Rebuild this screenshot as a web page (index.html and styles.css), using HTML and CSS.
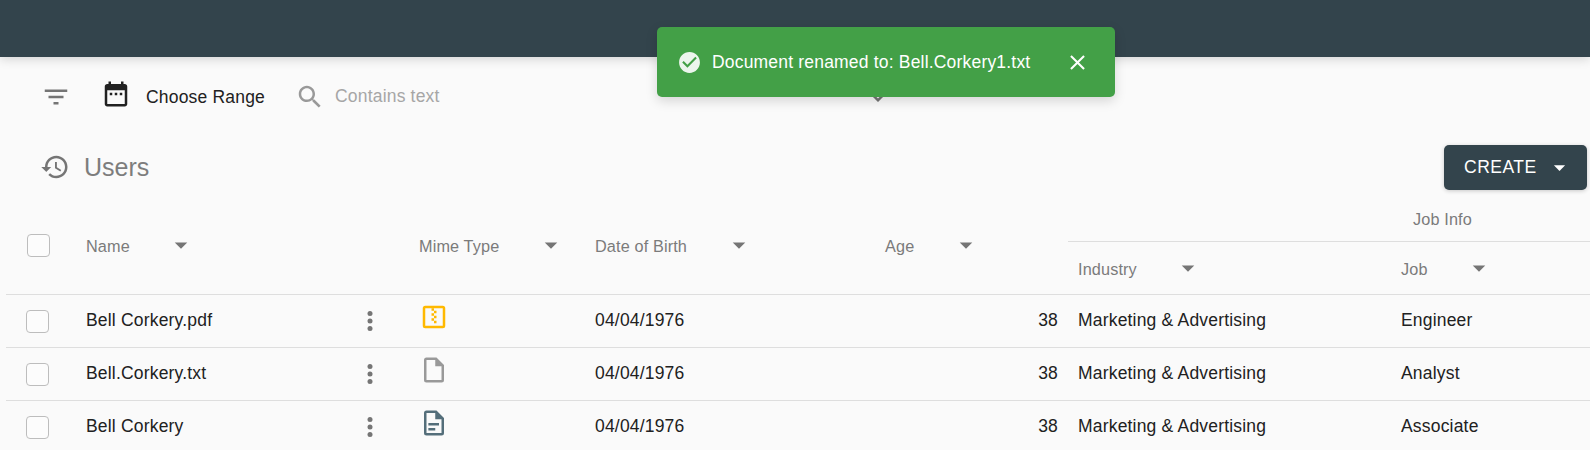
FILE: index.html
```html
<!DOCTYPE html>
<html lang="en">
<head>
<meta charset="utf-8">
<title>Users</title>
<link rel="stylesheet" href="styles.css">
</head>
<body>
<svg class="defs" width="0" height="0" aria-hidden="true">
  <symbol id="drop" viewBox="0 0 24 24"><path d="M7 10l5 5 5-5z"/></symbol>
  <symbol id="more" viewBox="0 0 24 24"><circle cx="12" cy="6" r="2"/><circle cx="12" cy="12" r="2"/><circle cx="12" cy="18" r="2"/></symbol>
</svg>
<header class="appbar"></header>
<section class="filters">
  <svg class="icon filter" viewBox="0 0 24 24"><path d="M10 18h4v-2h-4v2zM3 6v2h18V6H3zm3 7h12v-2H6v2z"/></svg>
  <svg class="icon calendar" viewBox="0 0 24 24"><path d="M9 11H7v2h2v-2zm4 0h-2v2h2v-2zm4 0h-2v2h2v-2zm2-7h-1V2h-2v2H8V2H6v2H5c-1.110 0-1.990.9-1.990 2L3 20c0 1.100.89 2 2 2h14c1.100 0 2-.9 2-2V6c0-1.100-.9-2-2-2zm0 16H5V9h14v11z"/></svg>
  <span class="range">Choose Range</span>
  <svg class="icon search" viewBox="0 0 24 24"><path d="M15.500 14h-.79l-.28-.27C15.410 12.590 16 11.110 16 9.500 16 5.910 13.090 3 9.500 3S3 5.910 3 9.500 5.910 16 9.500 16c1.610 0 3.090-.59 4.230-1.570l.27.28v.79l5 4.990L20.490 19l-4.990-5zm-6 0C7.010 14 5 11.990 5 9.500S7.010 5 9.500 5 14 7.010 14 9.500 11.990 14 9.500 14z"/></svg>
  <span class="placeholder">Contains text</span>
  <svg class="icon expand" viewBox="0 0 24 24"><path d="M16.590 8.590L12 13.170 7.410 8.590 6 10l6 6 6-6z"/></svg>
</section>
<section class="titlebar">
  <svg class="icon" viewBox="0 0 24 24"><path d="M13 3c-4.970 0-9 4.030-9 9H1l3.890 3.890.07.14L9 12H6c0-3.870 3.130-7 7-7s7 3.130 7 7-3.130 7-7 7c-1.930 0-3.680-.79-4.940-2.060l-1.420 1.420C8.270 19.990 10.510 21 13 21c4.970 0 9-4.030 9-9s-4.030-9-9-9zm-1 5v5l4.280 2.540.72-1.210-3.500-2.080V8H12z"/></svg>
  <h1 class="title">Users</h1>
  <button class="create"><span>CREATE</span><svg class="caret" viewBox="0 0 24 24"><use href="#drop"/></svg></button>
</section>
<main class="table">
  <div class="head">
    <div class="cell check"><span class="box"></span></div>
    <div class="cell"><span class="label">Name</span><svg class="icon sort" viewBox="0 0 24 24"><use href="#drop"/></svg></div>
    <div class="cell"></div>
    <div class="cell"><span class="label">Mime Type</span><svg class="icon sort" viewBox="0 0 24 24"><use href="#drop"/></svg></div>
    <div class="cell"><span class="label">Date of Birth</span><svg class="icon sort" viewBox="0 0 24 24"><use href="#drop"/></svg></div>
    <div class="cell"><span class="label">Age</span><svg class="icon sort" viewBox="0 0 24 24"><use href="#drop"/></svg></div>
    <div class="group">
      <div class="group-title">Job Info</div>
      <div class="group-cols">
        <div class="cell"><span class="label">Industry</span><svg class="icon sort" viewBox="0 0 24 24"><use href="#drop"/></svg></div>
        <div class="cell"><span class="label">Job</span><svg class="icon sort" viewBox="0 0 24 24"><use href="#drop"/></svg></div>
      </div>
    </div>
  </div>
  <div class="row">
    <div class="check"><span class="box"></span></div>
    <div>Bell Corkery.pdf</div>
    <div class="menu"><svg class="icon" viewBox="0 0 24 24"><use href="#more"/></svg></div>
    <div class="mime"><svg class="icon zip" viewBox="0 0 24 24"><path fill-rule="evenodd" d="M5 3h14a2 2 0 0 1 2 2v14a2 2 0 0 1-2 2H5a2 2 0 0 1-2-2V5a2 2 0 0 1 2-2zm0 2v14h14V5z"/><path d="M10 5h2v2h-2zM12 7h2v2h-2zM10 9h2v2h-2zM12 11h2v2h-2zM10 13h2v2h-2zM12 15h2v2h-2z"/></svg></div>
    <div>04/04/1976</div>
    <div class="num">38</div>
    <div class="industry">Marketing &amp; Advertising</div>
    <div>Engineer</div>
  </div>
  <div class="row">
    <div class="check"><span class="box"></span></div>
    <div>Bell.Corkery.txt</div>
    <div class="menu"><svg class="icon" viewBox="0 0 24 24"><use href="#more"/></svg></div>
    <div class="mime"><svg class="icon file" viewBox="0 0 24 24"><path fill-rule="evenodd" d="M6 2h8l6 6v12a2 2 0 0 1-2 2H6a2 2 0 0 1-2-2V4a2 2 0 0 1 2-2zm0 2v16h12V9h-5V4z"/></svg></div>
    <div>04/04/1976</div>
    <div class="num">38</div>
    <div class="industry">Marketing &amp; Advertising</div>
    <div>Analyst</div>
  </div>
  <div class="row">
    <div class="check"><span class="box"></span></div>
    <div>Bell Corkery</div>
    <div class="menu"><svg class="icon" viewBox="0 0 24 24"><use href="#more"/></svg></div>
    <div class="mime"><svg class="icon doc" viewBox="0 0 24 24"><path fill-rule="evenodd" d="M6 2h8l6 6v12a2 2 0 0 1-2 2H6a2 2 0 0 1-2-2V4a2 2 0 0 1 2-2zm0 2v16h12V9h-5V4z"/><path d="M7.500 12h8.500v2H7.500zM7.500 16h5.500v2H7.500z"/></svg></div>
    <div>04/04/1976</div>
    <div class="num">38</div>
    <div class="industry">Marketing &amp; Advertising</div>
    <div>Associate</div>
  </div>
</main>
<div class="toast">
  <svg class="ok" viewBox="0 0 24 24"><path d="M12 2C6.480 2 2 6.480 2 12s4.480 10 10 10 10-4.480 10-10S17.520 2 12 2zm-2 15l-5-5 1.410-1.410L10 14.170l7.590-7.590L19 8l-9 9z"/></svg>
  <span class="message">Document renamed to: Bell.Corkery1.txt</span>
  <svg class="close" viewBox="0 0 24 24"><path d="M19 6.410L17.590 5 12 10.590 6.410 5 5 6.410 10.590 12 5 17.590 6.410 19 12 13.410 17.590 19 19 17.590 13.410 12z"/></svg>
</div>
</body>
</html>
```
FILE: styles.css
```css
* { box-sizing: border-box; }

body {
  margin: 0;
  height: 450px;
  overflow: hidden;
  background: #fafafa;
  color: #212121;
  font-family: "Liberation Sans", Arial, sans-serif;
  font-size: 17.5px;
  letter-spacing: 0.1875px;
  line-height: 25px;
}

.defs { position: absolute; }

.icon {
  width: 30px;
  height: 30px;
  flex: none;
  display: block;
  fill: #757575;
}

.appbar {
  height: 57px;
  background: #33444c;
  box-shadow: 0 2px 10px rgba(0, 0, 0, 0.16);
}

.filters {
  display: flex;
  height: 80px;
  padding-left: 41px;
  align-items: center;
}
.filters .calendar { margin: 0 15px 6px 30px; fill: #212121; }
.range { width: 149px; }
.filters .search { fill: #999; }
.placeholder { margin: 0 0 2px 10px; width: 528px; color: #a6a6a6; }

.titlebar {
  display: flex;
  height: 60px;
  padding: 0 3px 0 40px;
  align-items: center;
}
.title {
  margin: 0 0 0 14px;
  flex: 1;
  font-size: 25px;
  font-weight: 400;
  line-height: 30px;
  letter-spacing: 0;
  color: #7d7d7d;
}
.create {
  display: flex;
  align-items: center;
  width: 143px;
  height: 45px;
  padding: 0 0 0 20px;
  border: 0;
  border-radius: 5px;
  background: #33444c;
  color: #fff;
  font: inherit;
  letter-spacing: 0.5px;
  box-shadow: 0 1px 4px rgba(0, 0, 0, 0.2);
}
.caret { width: 27px; height: 27px; margin-left: 9px; fill: #fff; }

.table { margin-left: 6px; }
.head,
.row {
  display: grid;
  grid-template-columns: 80px 269px 64px 176px 290px 183px 333px 189px;
  align-items: center;
  border-bottom: 1px solid #dedede;
}
.head {
  height: 98px;
  font-size: 16.25px;
  letter-spacing: 0.13px;
  color: #7b7b7b;
}
.row { height: 53px; padding-bottom: 2px; }
.cell { display: flex; align-items: center; }
.label { padding-top: 1px; }
.sort { margin: 0 0 1px 36.5px; }
.check { padding-left: 20px; }
.head .check { padding-left: 21px; }
.box {
  display: block;
  width: 23px;
  height: 23px;
  border: 1px solid #bdbdbd;
  border-radius: 4px;
  background: #fcfcfc;
}
.row .box { margin-top: 2px; }
.menu { padding-top: 1px; }
.mime { padding-bottom: 6px; }
.zip { fill: #ffb900; }
.file { fill: #999; }
.doc { fill: #546e7a; }
.num { text-align: right; padding-right: 10px; }
.industry { padding-left: 10px; }

.group { grid-column: 7 / -1; height: 97px; }
.group-title {
  height: 45px;
  padding-top: 10px;
  padding-left: 345px;
  border-bottom: 1px solid #dedede;
}
.group-cols {
  display: grid;
  grid-template-columns: 323px 1fr;
  height: 53px;
  padding-left: 10px;
  align-items: center;
}

.toast {
  position: absolute;
  left: 657px;
  top: 27px;
  width: 458px;
  height: 70px;
  display: flex;
  align-items: center;
  padding-left: 20px;
  border-radius: 5px;
  background: #43a047;
  color: #fff;
  box-shadow: 0 4px 12px rgba(0, 0, 0, 0.15);
}
.ok { width: 25px; height: 25px; opacity: 0.9; fill: #fff; }
.message { width: 343px; margin-left: 10px; white-space: nowrap; }
.close { width: 25px; height: 25px; margin-left: 10px; fill: #fff; }
```
